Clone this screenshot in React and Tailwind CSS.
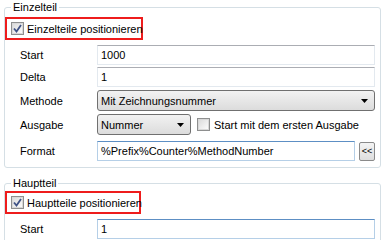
import React from 'react';

const CheckBox = ({ checked }) => (
  <span className="w-[13px] h-[13px] shrink-0 border border-[#8e8f8f] bg-[#f4f4f4] flex items-center justify-center">
    <span className="w-[11px] h-[11px] border border-[#d8d8d8] bg-gradient-to-br from-[#dcdcdc] to-[#fbfbfb] flex items-center justify-center">
      {checked && (
        <svg width="9" height="9" viewBox="0 0 9 9">
          <path d="M1 4.5 L3.5 7.5 L8 1" fill="none" stroke="#3f5285" strokeWidth="1.8" />
        </svg>
      )}
    </span>
  </span>
);

const TextBox = ({ value, focused, className = '' }) => (
  <div
    className={
      'h-[20px] border flex items-center px-[3px] bg-white whitespace-nowrap ' +
      (focused
        ? 'border-[#b5cfe7] border-t-[#5d8fc4] '
        : 'border-[#e3e9ef] border-t-[#abadb3] ') +
      className
    }
  >
    {value}
  </div>
);

const Select = ({ value, className = '' }) => (
  <div
    className={
      'h-[21px] border border-[#707070] rounded-[3px] bg-gradient-to-b from-[#f2f2f2] to-[#dcdcdc] flex items-center justify-between pl-[3px] pr-[6px] whitespace-nowrap ' +
      className
    }
  >
    <span>{value}</span>
    <svg width="7" height="4" viewBox="0 0 7 4">
      <path d="M0 0 H7 L3.5 4 Z" fill="#000" />
    </svg>
  </div>
);

const Row = ({ label, children, className = '' }) => (
  <div className={'flex items-center ' + className}>
    <span className="w-[92px] pl-[15px] shrink-0">{label}</span>
    <div className="flex-1 flex items-center">{children}</div>
  </div>
);

const App = () => {
  return (
    <div
      className="w-[385px] h-[240px] bg-white text-black text-[11px] leading-[14px] overflow-hidden px-[4px] whitespace-nowrap"
      style={{ fontFamily: '"Liberation Sans", Arial, sans-serif' }}
    >
      {/* Einzelteil */}
      <fieldset className="border border-[#d5dfe5] rounded-[3px] h-[168px] pr-[5px]">
        <legend className="ml-[6px] px-[2px] h-[14px]">Einzelteil</legend>
        <div className="mt-[3px] w-[138px] h-[23px] border-2 border-[#ee1c1c] flex items-center pl-[4px] gap-[3px]">
          <CheckBox checked />
          <span>Einzelteile positionieren</span>
        </div>
        <div className="flex flex-col mt-[5px]">
          <Row label="Start">
            <TextBox value="1000" className="flex-1" />
          </Row>
          <Row label="Delta" className="mt-[2px]">
            <TextBox value="1" className="flex-1" />
          </Row>
          <Row label="Methode" className="mt-[3px]">
            <Select value="Mit Zeichnungsnummer" className="flex-1" />
          </Row>
          <Row label="Ausgabe" className="mt-[3px]">
            <Select value="Nummer" className="w-[94px]" />
            <span className="ml-[6px] mr-[4px]">
              <CheckBox />
            </span>
            <span>Start mit dem ersten Ausgabe</span>
          </Row>
          <Row label="Format" className="mt-[6px]">
            <TextBox value="%Prefix%Counter%MethodNumber" className="flex-1" focused />
            <button className="ml-[4px] w-[16px] h-[19px] border border-[#8a8a8a] rounded-[2px] bg-gradient-to-b from-[#f4f4f4] to-[#dedede] text-[9px] leading-none flex items-center justify-center">
              &lt;&lt;
            </button>
          </Row>
        </div>
      </fieldset>

      {/* Hauptteil */}
      <fieldset className="mt-[8px] border border-[#d5dfe5] rounded-[3px] h-[80px] pr-[5px]">
        <legend className="ml-[6px] px-[2px] h-[14px]">Hauptteil</legend>
        <div className="mt-[1px] w-[136px] h-[23px] border-2 border-[#ee1c1c] flex items-center pl-[4px] gap-[3px]">
          <CheckBox checked />
          <span>Hauptteile positionieren</span>
        </div>
        <Row label="Start" className="mt-[5px]">
          <TextBox value="1" className="flex-1" focused />
        </Row>
      </fieldset>
    </div>
  );
};

export default App;
